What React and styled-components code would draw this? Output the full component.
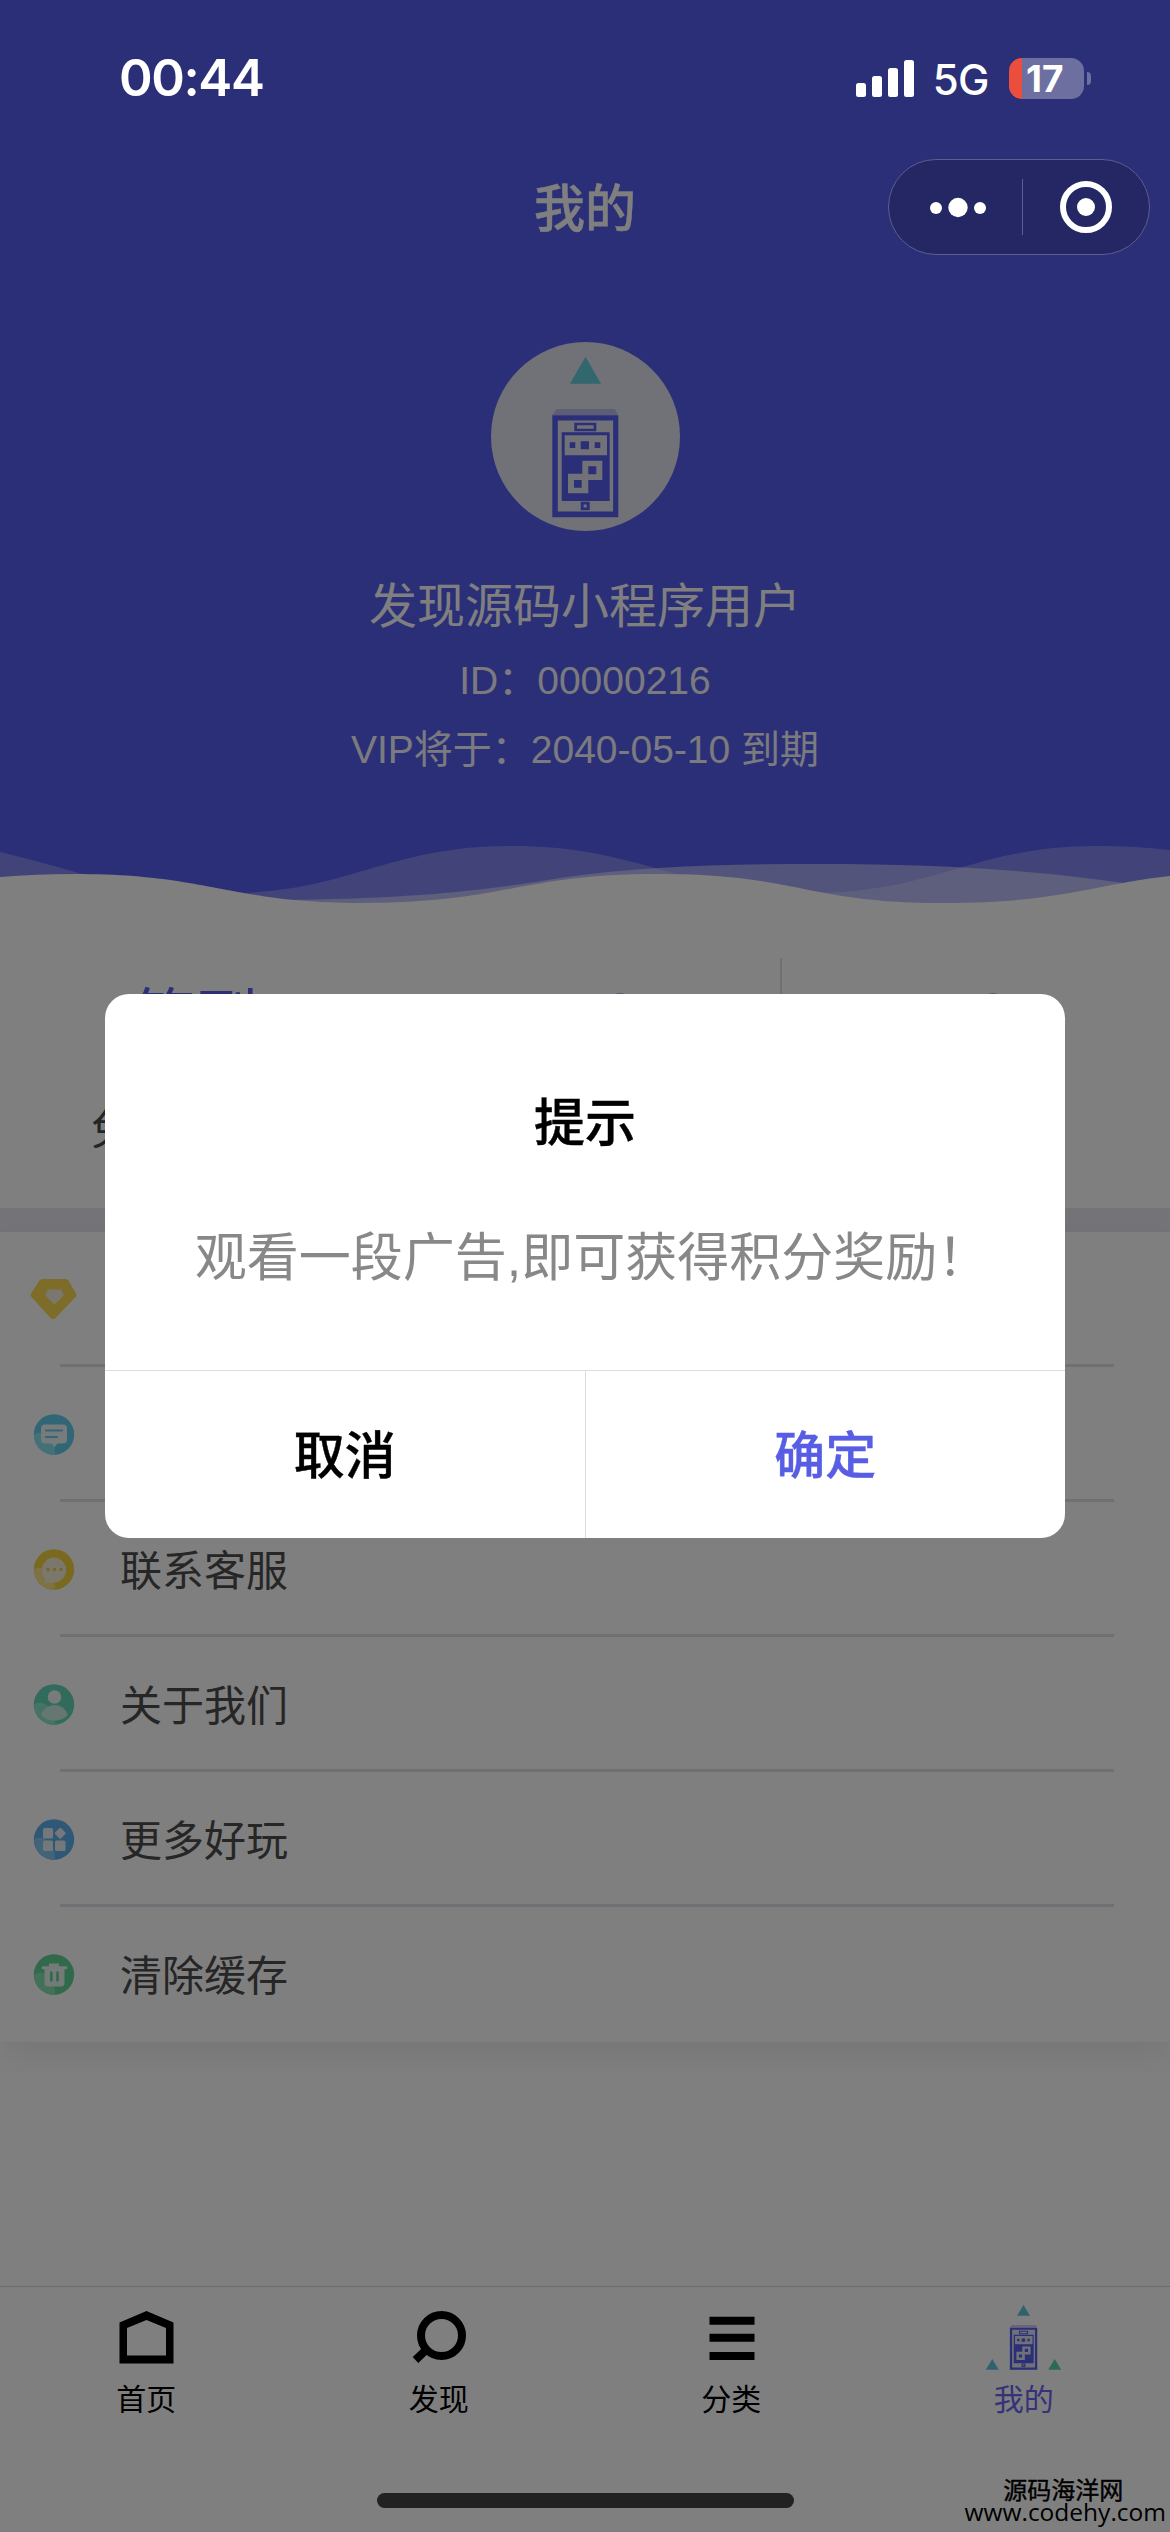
import React from 'react';
import styled, { createGlobalStyle } from 'styled-components';

const PRIMARY = '#575eef';

const GlobalStyle = createGlobalStyle`
  * {
    box-sizing: border-box;
  }
  body {
    margin: 0;
    background: #fff;
    font-family: 'Liberation Sans', 'Noto Sans CJK SC', sans-serif;
  }
  svg {
    display: block;
  }
`;

const Page = styled.div`
  position: relative;
  display: flex;
  flex-direction: column;
  width: 1170px;
  height: 2532px;
  overflow: hidden;
  background: #fff;
`;

const Header = styled.header`
  display: flex;
  flex-direction: column;
  align-items: center;
  flex: none;
  height: 918px;
  background: ${PRIMARY};
`;

const StatusBar = styled.div`
  position: relative;
  z-index: 2;
  display: flex;
  align-items: center;
  justify-content: space-between;
  width: 100%;
  height: 156px;
  padding: 0 79px 0 119px;
  color: #fff;
  font-family: Inter, sans-serif;
`;

const Clock = styled.div`
  font-size: 51px;
  font-weight: 600;
  line-height: 60px;
  letter-spacing: -1.4px;
`;

const StatusIcons = styled.div`
  display: flex;
  align-items: center;
`;

const Network = styled.span`
  margin: 3px 20px 0 18px;
  font-size: 42px;
  font-weight: 450;
  line-height: 48px;
  letter-spacing: -0.5px;
`;

const Battery = styled.div`
  width: 75px;
  height: 41px;
  padding-left: 17px;
  border-radius: 13px;
  background: linear-gradient(90deg, #eb4e3d 13px, #6d6fa1 13px);
  font-size: 37px;
  font-weight: 700;
  line-height: 41px;
`;

const BatteryCap = styled.div`
  width: 4px;
  height: 13px;
  margin-left: 3px;
  border-radius: 0 5px 5px 0;
  background: #6d6fa1;
`;

const NavBar = styled.div`
  display: grid;
  grid-template-columns: 1fr auto 1fr;
  align-items: center;
  width: 100%;
  height: 102px;
  padding: 0 20px;
`;

const NavTitle = styled.h1`
  grid-column: 2;
  margin: 5px 0 0;
  color: #fff;
  font-size: 51px;
  font-weight: 500;
  line-height: 60px;
  -webkit-text-stroke: 0.4px #fff;
`;

const Capsule = styled.div`
  position: relative;
  z-index: 2;
  justify-self: end;
  display: flex;
  align-items: center;
  width: 262px;
  height: 96px;
  border: 1px solid #5c5e91;
  border-radius: 48px;
  background: #242763;
`;

const CapsuleButton = styled.div`
  display: flex;
  align-items: center;
  justify-content: center;
  flex: 1;
  height: 56px;
  padding-left: ${({ $divided }) => ($divided ? 0 : '6px')};
  border-left: ${({ $divided }) => ($divided ? '1px solid #5c5e91' : 'none')};
`;

const Avatar = styled.div`
  width: 189px;
  height: 189px;
  margin-top: 84px;
  border-radius: 50%;
  background: #e2e4ee;
  overflow: hidden;
`;

const UserName = styled.div`
  margin-top: 44px;
  color: #fff;
  font-size: 48px;
  line-height: 64px;
`;

const UserMeta = styled.div`
  margin-top: ${({ $top }) => $top}px;
  color: #fff;
  font-size: 39px;
  line-height: 52px;
  opacity: 0.95;
`;

const Waves = styled.svg`
  margin-top: auto;
`;

const Stats = styled.section`
  display: flex;
  flex: none;
  height: 290px;
  padding-top: 40px;
`;

const Stat = styled.div`
  flex: 1;
  height: 210px;
  border-left: 2px solid ${({ $divided }) => ($divided ? '#e0e0e0' : 'transparent')};
  text-align: center;
`;

const StatValue = styled.div`
  height: 98px;
  padding-top: ${({ $number }) => ($number ? 17 : 21)}px;
  padding-left: ${({ $shift }) => $shift || 0}px;
  color: ${PRIMARY};
  font-size: 62px;
  line-height: 80px;
`;

const StatLabel = styled.div`
  margin-top: 45px;
  color: #4a4a4a;
  font-size: 42px;
  line-height: 60px;
`;

const Gap = styled.div`
  flex: none;
  height: 24px;
  background: #e9e9f1;
`;

const Menu = styled.ul`
  flex: none;
  margin: 0;
  padding: 0;
  list-style: none;
  box-shadow: 0 12px 30px rgba(0, 0, 0, 0.08);
`;

const MenuItem = styled.li`
  display: flex;
  align-items: center;
  height: 135px;
  padding-left: 30px;
  background: ${({ $last }) =>
    $last ? '#fff' : 'linear-gradient(#dfe0e9, #dfe0e9) 60px 100% / 1054px 3px no-repeat #fff'};
  color: #4c4c4c;
  font-size: 42px;
  line-height: 60px;

  svg {
    margin-right: 42px;
  }
`;

const MenuLabel = styled.span`
  padding-top: 5px;
`;

const TabBar = styled.nav`
  display: flex;
  margin-top: auto;
  height: 246px;
  border-top: 1px solid #dadada;
`;

const Tab = styled.div`
  display: flex;
  flex-direction: column;
  align-items: center;
  flex: 1;
  padding-top: 10px;
  color: ${({ $active }) => ($active ? '#6a65f2' : '#000')};
  font-size: 30px;
  line-height: 40px;
`;

const TabLabel = styled.span`
  margin-top: 2px;
`;

const Mask = styled.div`
  position: absolute;
  inset: 0;
  z-index: 1;
  display: flex;
  align-items: center;
  justify-content: center;
  background: rgba(0, 0, 0, 0.5);
`;

const Dialog = styled.div`
  display: flex;
  flex-direction: column;
  width: 960px;
  height: 544px;
  border-radius: 24px;
  background: #fff;
  text-align: center;
`;

const DialogTitle = styled.h2`
  margin: 99px 0 0;
  font-size: 51px;
  font-weight: 500;
  line-height: 62px;
  -webkit-text-stroke: 0.4px #000;
`;

const DialogText = styled.p`
  margin: 72px 0 0;
  padding-left: 14px;
  color: #888;
  font-size: 52px;
  line-height: 62px;
  white-space: nowrap;
`;

const DialogActions = styled.div`
  display: flex;
  height: 168px;
  margin-top: auto;
  border-top: 1px solid #dedede;
`;

const DialogButton = styled.button`
  flex: 1;
  padding: 0 0 5px;
  border: none;
  border-left: ${({ $primary }) => ($primary ? '1px solid #dedede' : 'none')};
  background: none;
  color: ${({ $primary }) => ($primary ? '#585ee4' : '#000')};
  font-family: inherit;
  font-size: 51px;
  font-weight: 500;
  -webkit-text-stroke: 0.4px;
`;

const HomeIndicator = styled.div`
  position: absolute;
  bottom: 24px;
  left: 377px;
  z-index: 2;
  width: 417px;
  height: 15px;
  border-radius: 8px;
  background: #222;
`;

const Watermark = styled.div`
  position: absolute;
  right: 4px;
  bottom: 9px;
  z-index: 2;
  text-align: center;
  color: #000;
  font-family: 'Open Sans', 'Noto Sans CJK SC', sans-serif;
  font-size: 24.5px;
  font-weight: 500;
  line-height: 22px;

  div:first-child {
    padding-right: 4px;
    font-size: 24px;
    font-weight: 400;
    -webkit-text-stroke: 0.4px #000;
  }
`;

// phone drawing shared by the avatar and the active tab
const Phone = () => (
  <g fill={PRIMARY}>
    <path d="M66 67h58l3 6H61z" opacity=".3" />
    <path fillRule="evenodd" d="M61.3 73.3h66v102h-66zM66.8 78.5v91h55.3v-91z" />
    <path fillRule="evenodd" d="M83.3 80.7h22v8.6h-22zM86 83.3v3.4h16.6v-3.4z" />
    <path fillRule="evenodd" d="M70.7 90.3h48V159h-48zM73.7 93.3v20H116v-20z" />
    <path d="M78.7 100.3h5.6v5.7h-5.6zM89.7 99.3h8.3v8h-8.3zM103.7 100.3h5.6v5.7h-5.6z" />
    <path
      fill="#e2e4ee"
      fillRule="evenodd"
      d="M91.3 118.7h20V138h-14v13.3H77v-19.6h14.3zM97.3 124.3v8h8v-8zM83 138v7.7h7.7V138z"
    />
    <path fillRule="evenodd" d="M89.7 159.7h9v8.6h-9zM92.7 162.5v3h3v-3z" />
  </g>
);

const HomeIcon = () => (
  <svg width="81" height="81" viewBox="0 0 81 81">
    <path fillRule="evenodd" d="M40.5 14L67.5 25.5V66.5H13.5V25.5zM40.5 23L21 31V58.5H60V31z" />
  </svg>
);

const FindIcon = () => (
  <svg width="81" height="81" viewBox="0 0 81 81" fill="none" stroke="#000" strokeWidth="8">
    <circle cx="43.5" cy="38.5" r="20.5" />
    <path d="M29 52L17.5 63" />
  </svg>
);

const CategoryIcon = () => (
  <svg width="81" height="81" viewBox="0 0 81 81">
    <path d="M18.5 19.7h45v8h-45zM18.5 36.7h45v8h-45zM18.5 55h45v8h-45z" />
  </svg>
);

const MineIcon = () => (
  <svg width="81" height="81" viewBox="0 0 81 81">
    <path d="M40.5 8l6.5 10.8H34z" fill="#60c4dc" />
    <path d="M9.3 62l6.5 10.8h-13z" fill="#60c4dc" />
    <path d="M71.7 62l6.5 10.8h-13z" fill="#56d4b0" />
    <g transform="translate(1.5 .3) scale(.414)">
      <path d="M61.3 73.3h66v102h-66z" fill="#e2e4ee" />
      <Phone />
    </g>
  </svg>
);

const Disc = ({ color, light, children }) => (
  <svg width="48" height="42" viewBox="0 0 48 42">
    <circle cx="24" cy="20.5" r="20.2" fill={color} />
    <path d="M4 20.5C11 15 26 22 25 40.7C13 41 4 32 4 20.5z" fill={light} />
    {children}
  </svg>
);

const menu = [
  {
    label: '积分记录',
    icon: (
      <svg width="48" height="42" viewBox="0 0 48 42">
        <path
          d="M12.5 0h23q2 0 3 1.500l7.500 13q1 2-.5 3.500L25.500 39q-2.500 2.500-5 0L1.500 18Q0 16.500 1 14.500L9.500 1.500Q10.500 0 12.500 0z"
          fill="#fcd852"
        />
        <path
          d="M19 10.500h11q1 0 1.500.8l2 3.700q.6 1-.3 2l-7.500 7.500q-1.200 1.200-2.400 0l-7.400-7.500q-1-1-.3-2l2-3.700q.5-.8 1.400-.8z"
          fill="#f2eedc"
        />
      </svg>
    ),
  },
  {
    label: '意见反馈',
    icon: (
      <Disc color="#62cdec" light="#86e2ee">
        <path
          d="M15 10.500h18q4 0 4 4v11q0 4-4 4h-5.500l-3 3.500-3-3.500H15q-4 0-4-4v-11q0-4 4-4z"
          fill="#eef6f8"
        />
        <path d="M16 16.500h16M16 23h11" stroke="#62cdec" strokeWidth="2.2" strokeLinecap="round" />
      </Disc>
    ),
  },
  {
    label: '联系客服',
    icon: (
      <Disc color="#f4d440" light="#fae486">
        <path
          d="M25 8.500a12.500 12.500 0 1 1-3 25c-2 .8-5 1-8 .2 1.500-2 1.500-3 1-4.500A12.500 12.500 0 0 1 25 8.500z"
          fill="#f6f0d6"
        />
        <path d="M18 20.500h.1M24.500 20.500h.1M31 20.500h.1" stroke="#e8cf66" strokeWidth="3.6" strokeLinecap="round" />
      </Disc>
    ),
  },
  {
    label: '关于我们',
    icon: (
      <Disc color="#62d6b6" light="#8ae6cc">
        <circle cx="24.5" cy="13" r="6.8" fill="#eef6f3" />
        <path d="M11 31Q15 21 24.500 21T38 31Q33 36.500 24.500 36.500T11 31z" fill="#ccece2" />
      </Disc>
    ),
  },
  {
    label: '更多好玩',
    icon: (
      <Disc color="#5cb0ea" light="#82c8ee">
        <g fill="#e8f1f7">
          <rect x="13" y="9" width="10" height="10.5" rx="1.5" />
          <rect x="13" y="21.5" width="10" height="10.5" rx="1.5" />
          <rect x="25" y="21.5" width="10.5" height="10.5" rx="1.5" />
          <rect x="26" y="10" width="8.5" height="8.5" rx="1.5" transform="rotate(45 30.25 14.25)" />
        </g>
      </Disc>
    ),
  },
  {
    label: '清除缓存',
    icon: (
      <Disc color="#62d494" light="#84e2ae">
        <path
          d="M19 9.500h10v2.700h7q1.500 0 1.500 1.500t-1.500 1.500h-1.500V29q0 3.500-3.500 3.500H18q-3.500 0-3.500-3.500V15.200H13q-1.500 0-1.500-1.500t1.500-1.500h6z"
          fill="#e8f5ee"
        />
        <path d="M21.300 18.500v8M27.500 18.500v8" stroke="#62d494" strokeWidth="2.6" strokeLinecap="round" />
      </Disc>
    ),
  },
];

const tabs = [
  { label: '首页', icon: <HomeIcon /> },
  { label: '发现', icon: <FindIcon /> },
  { label: '分类', icon: <CategoryIcon /> },
  { label: '我的', icon: <MineIcon />, active: true },
];

const App = () => (
  <Page lang="zh-CN">
    <GlobalStyle />
    <Header>
      <StatusBar>
        <Clock>00:44</Clock>
        <StatusIcons>
          <svg width="60" height="41" viewBox="0 0 60 41" fill="#fff">
            <rect x="1" y="25" width="10" height="14" rx="2.5" />
            <rect x="17" y="18" width="10" height="21" rx="2.5" />
            <rect x="33" y="10" width="10" height="29" rx="2.5" />
            <rect x="49" y="2" width="10" height="37" rx="2.5" />
          </svg>
          <Network>5G</Network>
          <Battery>17</Battery>
          <BatteryCap />
        </StatusIcons>
      </StatusBar>
      <NavBar>
        <NavTitle>我的</NavTitle>
        <Capsule>
          <CapsuleButton>
            <svg width="62" height="24" viewBox="0 0 62 24" fill="#fff">
              <circle cx="9" cy="13" r="6" />
              <circle cx="31" cy="12.5" r="9.7" />
              <circle cx="53" cy="13" r="6" />
            </svg>
          </CapsuleButton>
          <CapsuleButton $divided>
            <svg width="52" height="52" viewBox="0 0 52 52">
              <circle cx="26" cy="26" r="23" fill="none" stroke="#fff" strokeWidth="6" />
              <circle cx="26" cy="26" r="9" fill="#fff" />
            </svg>
          </CapsuleButton>
        </Capsule>
      </NavBar>
      <Avatar>
        <svg width="189" height="189" viewBox="0 0 189 189">
          <path d="M94.5 14.7L110 41.7H79z" fill="#64cedb" />
          <Phone />
        </svg>
      </Avatar>
      <UserName>发现源码小程序用户</UserName>
      <UserMeta $top={16}>ID：00000216</UserMeta>
      <UserMeta $top={17}>VIP将于：2040-05-10 到期</UserMeta>
      <Waves width="1170" height="78" viewBox="0 840 1170 78" fill="#fff">
        <path
          d="M0 852C40 862 62 868 82 874C130 888 180 893 228 893C350 893 385 846 512 846C640 846 680 893 812 893C934 893 975 846 1096 846Q1135 846 1170 850V918H0z"
          opacity=".27"
        />
        <path
          d="M0 918V906C120 902 200 902 284 900C400 899 480 892 560 878C640 866 730 864 821 864C960 864 1060 872 1170 890V918z"
          opacity=".46"
        />
        <path d="M0 877Q36 874 75 874C210 874 230 903 360 903C505 903 520 874 658 874C800 874 805 903 945 903C1060 903 1095 884 1170 876V918H0z" />
      </Waves>
    </Header>
    <Stats>
      <Stat>
        <StatValue>签到</StatValue>
        <StatLabel>免费领积分</StatLabel>
      </Stat>
      <Stat>
        <StatValue $number $shift={68}>0</StatValue>
      </Stat>
      <Stat $divided>
        <StatValue $number>10</StatValue>
      </Stat>
    </Stats>
    <Gap />
    <Menu>
      {menu.map(({ label, icon }, i) => (
        <MenuItem key={label} $last={i === menu.length - 1}>
          {icon}
          <MenuLabel>{label}</MenuLabel>
        </MenuItem>
      ))}
    </Menu>
    <TabBar>
      {tabs.map(({ label, icon, active }) => (
        <Tab key={label} $active={active}>
          {icon}
          <TabLabel>{label}</TabLabel>
        </Tab>
      ))}
    </TabBar>
    <Mask>
      <Dialog>
        <DialogTitle>提示</DialogTitle>
        <DialogText>观看一段广告,即可获得积分奖励！</DialogText>
        <DialogActions>
          <DialogButton>取消</DialogButton>
          <DialogButton $primary>确定</DialogButton>
        </DialogActions>
      </Dialog>
    </Mask>
    <HomeIndicator />
    <Watermark>
      <div>源码海洋网</div>
      <div>www.codehy.com</div>
    </Watermark>
  </Page>
);

export default App;
